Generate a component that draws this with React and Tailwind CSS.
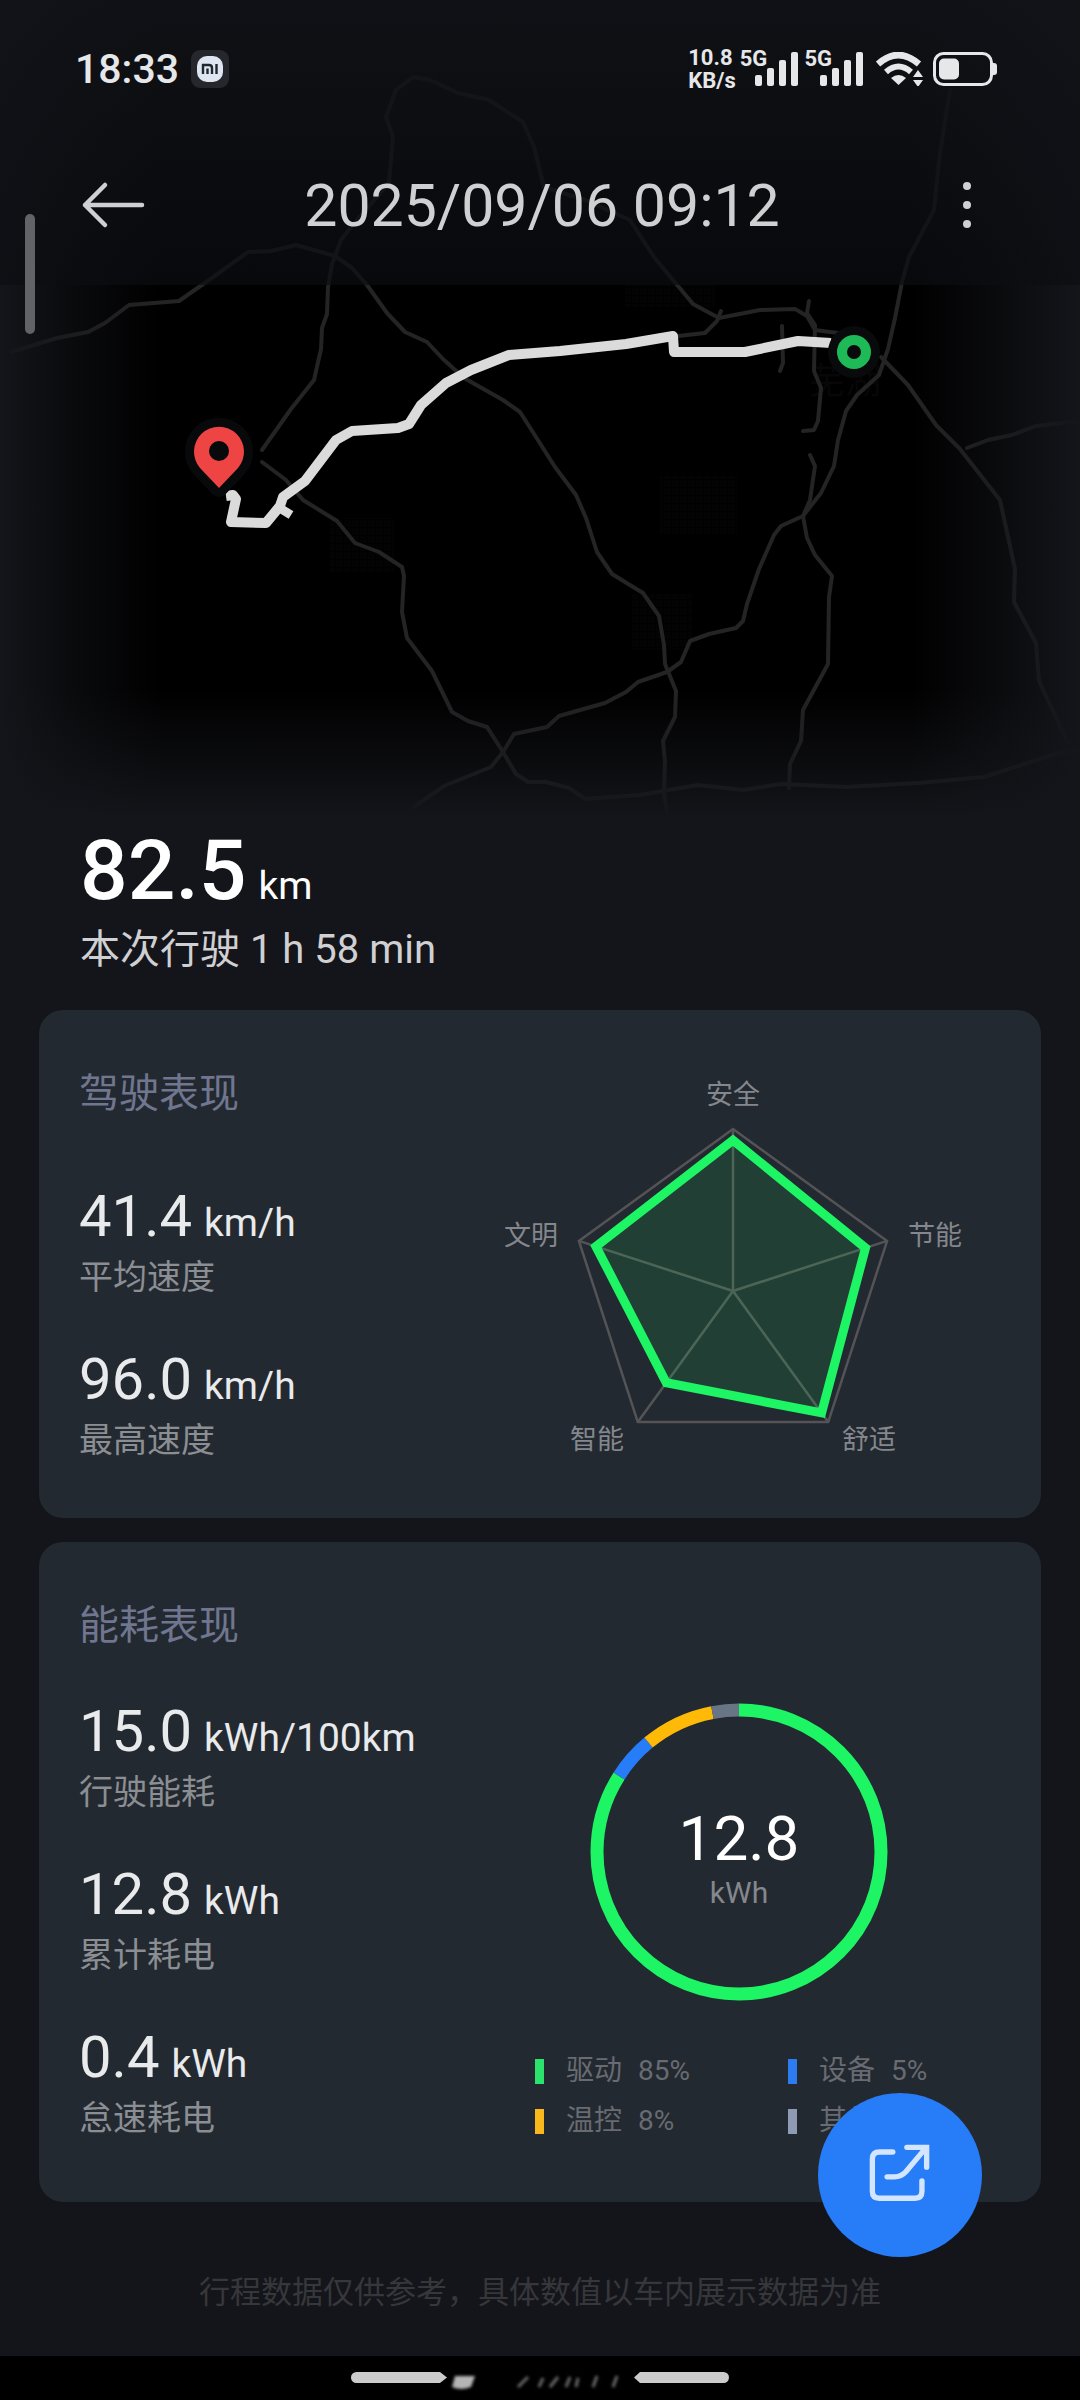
const ROADS = [
    'M11 352L57 338L88 332L105 323L129 305L179 301L209 280L248 252L271 251L296 245L335 256L352 268L367 285L387 313L405 332L427 342L443 359L464 378L503 400L520 412L536 437L555 467L576 495L586 518L597 552L612 574L643 593L659 616L664 645L665 664L676 691L675 717L663 741L665 762L664 793L667 812',
    'M262 450L291 409L314 380L321 349L322 328L327 314L328 287L332 264L341 240L351 227L389 183L393 137L386 117L396 90L413 77L430 80L458 93L489 100L523 122L534 147L544 187L585 200L630 220L654 257L673 280L693 304L719 318L760 310L795 309L807 316L815 330L838 333',
    'M678 336L705 333L717 321L721 311',
    'M809 301L807 313L815 325L814 371L821 388L818 421L814 430L803 431',
    'M782 326L783 363L780 371',
    'M950 90L940 153L934 210L909 257L902 282L895 318L888 349L879 375L857 395L846 411L838 440L834 466L821 493L803 516L781 526L774 535L759 569L747 604L743 621L736 628L709 634L690 641L681 662L667 672L638 682L626 692L605 703L559 716L547 727L514 734L503 752L491 767L444 786L414 807',
    'M810 455L815 466L810 500L803 516L807 538L815 555L832 576L829 597L828 664L803 710L801 741L790 764L789 788',
    'M881 357L908 385L936 425L960 449L1000 500L1015 569L1014 602L1036 643L1039 681L1067 741',
    'M967 448L988 440L1012 435L1036 426L1080 421',
    'M262 462L286 480L303 500L337 521L355 543L379 552L402 567L404 576L402 612L407 638L432 671L452 712L468 721L487 727L503 752L516 774L528 782L546 782L569 788L585 799L640 795L698 785L743 790L781 784L846 787L919 783L984 777L1056 754L1080 749',
];

const ROUTE = 'M226 496L233 495L236 499L231 522L266 523L280 506L283 497L305 481L336 440L352 431L398 428L409 424L421 405L446 383L471 370L509 355L560 351L626 344L673 336L674 352L745 352L798 341L831 343';

const DRIVING = [
    { value: '41.4', unit: 'km/h', label: '平均速度' },
    { value: '96.0', unit: 'km/h', label: '最高速度' },
];

const ENERGY = [
    { value: '15.0', unit: 'kWh/100km', label: '行驶能耗' },
    { value: '12.8', unit: 'kWh', label: '累计耗电' },
    { value: '0.4', unit: 'kWh', label: '怠速耗电' },
];

const SCORES = [
    { label: '安全', score: 0.93, x: 253, y: 28 },
    { label: '节能', score: 0.86, x: 455, y: 169 },
    { label: '舒适', score: 0.93, x: 389, y: 373 },
    { label: '智能', score: 0.7, x: 117, y: 373 },
    { label: '文明', score: 0.89, x: 51, y: 169 },
];

const LEGEND = [
    { label: '驱动', percent: '85%', bar: 'bg-[#2be36c]' },
    { label: '设备', percent: '5%', bar: 'bg-[#2c7bf0]' },
    { label: '温控', percent: '8%', bar: 'bg-[#f9b81c]' },
    { label: '其他', percent: '2%', bar: 'bg-[#8f9bb5]' },
];

const SEGMENTS = [
    { color: '#1ef564', start: 0, size: 84 },
    { color: '#277cf8', start: 84, size: 5 },
    { color: '#ffba08', start: 89, size: 8 },
    { color: '#687585', start: 97, size: 3 },
];

function SignalBars() {
    return (
        <svg width="43" height="34" viewBox="0 0 43 34" fill="#e6e7e9">
            <rect x="0" y="23" width="7" height="11" rx="2" />
            <rect x="12" y="16" width="7" height="18" rx="2" />
            <rect x="24" y="8" width="7" height="26" rx="2" />
            <rect x="36" y="0" width="7" height="34" rx="2" />
        </svg>
    );
}

function StatusBar() {
    return (
        <div className="flex h-[138px] items-center justify-between pr-[83px] pl-[75px] text-[#e6e7e9]">
            <div className="flex items-center gap-3">
                <span className="text-[41px] leading-[48px] font-medium">18:33</span>
                <svg width="38" height="38" viewBox="0 0 38 38">
                    <rect width="38" height="38" rx="9" fill="#25272d" />
                    <rect x="6" y="6" width="26" height="26" rx="10" fill="#dfe6f2" />
                    <path d="M12 24v-9h6q3 0 3 3v6M16.500 18.500V24M25.500 14v10" fill="none" stroke="#22262e" strokeWidth="2.400" />
                </svg>
            </div>
            <div className="flex items-center">
                <div className="text-[22px] leading-[23px] font-bold">
                    <div>10.8</div>
                    <div>KB/s</div>
                </div>
                <div className="ml-[4px] flex">
                    <span className="-mt-[5px] -mr-[12px] text-[22px] leading-[23px] font-bold">5G</span>
                    <SignalBars />
                </div>
                <div className="ml-[6px] flex">
                    <span className="-mt-[5px] -mr-[12px] text-[22px] leading-[23px] font-bold">5G</span>
                    <SignalBars />
                </div>
                <svg className="ml-[13px]" width="47" height="34" viewBox="0 0 47 34" fill="none" stroke="#e6e7e9">
                    <path d="M2 12Q22 -6 43 12" strokeWidth="6.500" />
                    <path d="M10 20Q22.500 9 35 20" strokeWidth="6" />
                    <path d="M22.500 33L15 26Q22.500 20 30 26Z" fill="#e6e7e9" stroke="none" />
                    <path d="M37 25L42 18L47 25ZM37 28L42 35L47 28Z" fill="#e6e7e9" stroke="none" />
                </svg>
                <svg className="ml-[10px]" width="64" height="34" viewBox="0 0 64 34">
                    <rect x="1.500" y="1.500" width="57" height="31" rx="9" fill="none" stroke="#e6e7e9" strokeWidth="3" />
                    <rect x="6" y="6.500" width="20" height="21" rx="5" fill="#e6e7e9" />
                    <path d="M59 11h2q3 0 3 3v6q0 3-3 3h-2z" fill="#e6e7e9" />
                </svg>
            </div>
        </div>
    );
}

function TitleBar() {
    return (
        <div className="flex h-[147px] items-start justify-between pt-[35px] pr-[88px] pl-[80px] text-[#cfd0d2]">
            <button type="button" aria-label="返回" className="flex h-16 w-[62px] items-center">
                <svg className="shrink-0" width="66" height="48" viewBox="0 0 66 48" fill="none" stroke="currentColor" strokeWidth="4.500" strokeLinecap="round" strokeLinejoin="round">
                    <path d="M25 4L5 24L25 44M5 24H62" />
                </svg>
            </button>
            <h1 className="text-[59px] leading-[66px]">2025/09/06 09:12</h1>
            <button type="button" aria-label="更多" className="flex h-16 w-[50px] items-center justify-center">
                <svg width="10" height="50" viewBox="0 0 10 50" fill="currentColor">
                    <circle cx="5" cy="6" r="4" />
                    <circle cx="5" cy="25" r="4" />
                    <circle cx="5" cy="44" r="4" />
                </svg>
            </button>
        </div>
    );
}

function RouteMap() {
    return (
        <svg viewBox="0 0 1080 820" className="block h-auto w-full">
            <defs>
                <linearGradient id="fadeLeft">
                    <stop offset="0" stopColor="#14151a" />
                    <stop offset="0.500" stopColor="#14151a" stopOpacity="0.450" />
                    <stop offset="1" stopColor="#14151a" stopOpacity="0" />
                </linearGradient>
                <linearGradient id="fadeRight">
                    <stop offset="0" stopColor="#14151a" stopOpacity="0" />
                    <stop offset="0.500" stopColor="#14151a" stopOpacity="0.500" />
                    <stop offset="1" stopColor="#14151a" />
                </linearGradient>
                <linearGradient id="fadeBottom" x2="0" y2="1">
                    <stop offset="0" stopColor="#14151a" stopOpacity="0" />
                    <stop offset="0.500" stopColor="#14151a" stopOpacity="0.500" />
                    <stop offset="1" stopColor="#14151a" />
                </linearGradient>
                <pattern id="blocks" width="8" height="8" patternUnits="userSpaceOnUse">
                    <rect width="7" height="7" fill="#030303" />
                </pattern>
            </defs>
            <rect width="1080" height="820" fill="#000" />
            <g fill="url(#blocks)">
                <rect x="660" y="476" width="77" height="58" />
                <rect x="330" y="518" width="64" height="54" />
                <rect x="632" y="594" width="60" height="56" />
                <rect x="625" y="285" width="90" height="22" />
            </g>
            <text x="845" y="394" textAnchor="middle" fontSize="36" fill="#070708">芜湖</text>
            <g fill="none" stroke="#242425" strokeWidth="4" strokeLinejoin="round" strokeLinecap="round">
                {ROADS.map((d) => <path key={d} d={d} />)}
            </g>
            <rect width="160" height="820" fill="url(#fadeLeft)" />
            <rect x="910" width="170" height="820" fill="url(#fadeRight)" />
            <rect y="690" width="1080" height="130" fill="url(#fadeBottom)" />
            <path d={ROUTE} fill="none" stroke="#dbdbdb" strokeWidth="10" strokeLinejoin="round" />
            <path d="M278 507L291 515" stroke="#dbdbdb" strokeWidth="9" />
            <path
                d="M219 488L200 468A25 25 0 1 1 238 468Z"
                fill="#ef4444"
                stroke="#08090b"
                strokeWidth="18"
                strokeLinejoin="round"
                paintOrder="stroke"
            />
            <circle cx="219" cy="451" r="10" fill="#08090b" />
            <circle cx="854" cy="352" r="26" fill="#090a0b" />
            <circle cx="854" cy="352" r="12" fill="none" stroke="#1fba58" strokeWidth="10" />
        </svg>
    );
}

function Stat({ value, unit, label }) {
    return (
        <div>
            <div className="flex items-baseline gap-3 text-[#e9eaec]">
                <span className="text-[58px] leading-[72px]">{value}</span>
                <span className="text-[39px] leading-[48px]">{unit}</span>
            </div>
            <div className="text-[34px] leading-[50px] text-[#8b8e92]">{label}</div>
        </div>
    );
}

function point(index, ratio) {
    const angle = (index * 72 * Math.PI) / 180;
    const r = 162 * ratio;
    return `${(253 + r * Math.sin(angle)).toFixed(1)},${(225 - r * Math.cos(angle)).toFixed(1)}`;
}

function Radar() {
    return (
        <svg className="h-[396px] w-[506px] shrink-0" viewBox="0 0 506 396">
            <g fill="none" stroke="#545456" strokeWidth="2.500">
                <polygon points={SCORES.map((s, i) => point(i, 1)).join(' ')} />
                {SCORES.map((s, i) => (
                    <polyline key={s.label} points={`253,225 ${point(i, 1)}`} />
                ))}
            </g>
            <polygon
                points={SCORES.map((s, i) => point(i, s.score)).join(' ')}
                fill="#1ef564"
                fillOpacity="0.110"
                stroke="#1ef564"
                strokeWidth="9"
            />
            {SCORES.map((s) => (
                <text key={s.label} x={s.x} y={s.y + 10} textAnchor="middle" fontSize="27" fill="#84878d">{s.label}</text>
            ))}
        </svg>
    );
}

function Donut() {
    return (
        <div className="relative">
            <svg className="size-[298px]" viewBox="0 0 298 298">
                <g fill="none" strokeWidth="13" transform="rotate(-90 149 149)">
                    {SEGMENTS.map((s) => (
                        <circle
                            key={s.color}
                            cx="149"
                            cy="149"
                            r="142"
                            pathLength="100"
                            stroke={s.color}
                            strokeDasharray={`${s.size} ${100 - s.size}`}
                            strokeDashoffset={-s.start}
                        />
                    ))}
                </g>
            </svg>
            <div className="absolute inset-0 flex flex-col items-center justify-center pt-[18px]">
                <span className="text-[62px] leading-[64px] text-white">12.8</span>
                <span className="text-[30px] leading-[44px] text-[#84878d]">kWh</span>
            </div>
        </div>
    );
}

export default function App() {
    return (
        <div className="relative min-h-screen bg-[#14151a] font-[Roboto,'Noto_Sans_CJK_SC',sans-serif]">
            <header className="relative">
                <RouteMap />
                <div className="absolute inset-x-0 top-0 bg-linear-to-b from-[#111318]/90 to-[#0c0d11]/70">
                    <StatusBar />
                    <TitleBar />
                </div>
                <div className="absolute top-[214px] left-[25px] h-[120px] w-[10px] rounded-full bg-[#626366]" />
            </header>

            <main>
                <section className="px-20">
                    <div className="flex items-baseline gap-3 text-white">
                        <span className="text-[84px] leading-[102px] font-medium">82.5</span>
                        <span className="text-[39px] leading-[48px]">km</span>
                    </div>
                    <p className="text-[40px] leading-[56px] text-[#d0d0d3]">本次行驶 1 h 58 min</p>
                </section>

                <div className="mt-8 flex flex-col gap-6 px-[39px]">
                    <section className="flex justify-between rounded-3xl bg-[#232930] pt-14 pr-[55px] pb-[53px] pl-10">
                        <div>
                            <h2 className="text-[40px] leading-[56px] text-[#70768f]">驾驶表现</h2>
                            <div className="mt-[58px] flex flex-col gap-[41px]">
                                {DRIVING.map((s) => <Stat key={s.label} {...s} />)}
                            </div>
                        </div>
                        <Radar />
                    </section>

                    <section className="flex items-end justify-between rounded-3xl bg-[#232930] pt-14 pr-[98px] pb-[59px] pl-10">
                        <div>
                            <h2 className="text-[40px] leading-[56px] text-[#70768f]">能耗表现</h2>
                            <div className="mt-[41px] flex flex-col gap-[41px]">
                                {ENERGY.map((s) => <Stat key={s.label} {...s} />)}
                            </div>
                        </div>
                        <div className="flex w-[408px] shrink-0 flex-col items-center gap-[50px] pb-[2px]">
                            <Donut />
                            <ul className="grid w-full grid-cols-[253px_1fr] gap-y-[10px]">
                                {LEGEND.map((l) => (
                                    <li key={l.label} className="flex items-center text-[28px] leading-[40px] text-[#686b71]">
                                        <span className={`mr-[22px] h-[25px] w-[9px] ${l.bar}`} />
                                        {l.label}
                                        <span className="ml-4">{l.percent}</span>
                                    </li>
                                ))}
                            </ul>
                        </div>
                    </section>
                </div>

                <p className="mt-[66px] text-center text-[31px] leading-[50px] text-[#36373b]">
                    行程数据仅供参考，具体数值以车内展示数据为准
                </p>
            </main>

            <button
                type="button"
                aria-label="分享"
                className="fixed right-[98px] bottom-[143px] flex size-[164px] items-center justify-center rounded-full bg-[#277cf8]"
            >
                <svg width="67" height="67" viewBox="170 170 200 200" fill="none" stroke="#d4e6ff" strokeWidth="16" strokeLinecap="round">
                    <path d="M247 200H207Q186 200 186 221V317Q186 338 207 338H313Q334 338 334 317V286" />
                    <path d="M230 274H252C268 274 276 270 286 259L342 192" />
                    <path d="M289 186H348V245" />
                </svg>
            </button>

            <footer className="mt-[38px] flex h-[45px] justify-center bg-black pt-4">
                <svg width="378" height="22" viewBox="0 0 378 22">
                    <defs>
                        <filter id="soft" x="-50%" y="-50%" width="200%" height="200%">
                            <feGaussianBlur stdDeviation="1.500" />
                        </filter>
                    </defs>
                    <path d="M5.500 0H89L96 5.500L89 11H5.500A5.500 5.500 0 0 1 5.500 0Z" fill="#cbcbcb" />
                    <path d="M372.500 0H289L283 5.500L289 11H372.500A5.500 5.500 0 0 0 372.500 0Z" fill="#cbcbcb" />
                    <path d="M104 4H124L120 15Q110 19 101 15Z" fill="#b5b5b5" filter="url(#soft)" />
                    <path
                        d="M167 15L177 5M188 15L192 6M199 15L207 5M215 15L219 5M225 15L227 6M242 15L246 4M262 15L266 4"
                        stroke="#6b6b6b"
                        strokeWidth="3"
                        filter="url(#soft)"
                    />
                </svg>
            </footer>
        </div>
    );
}
